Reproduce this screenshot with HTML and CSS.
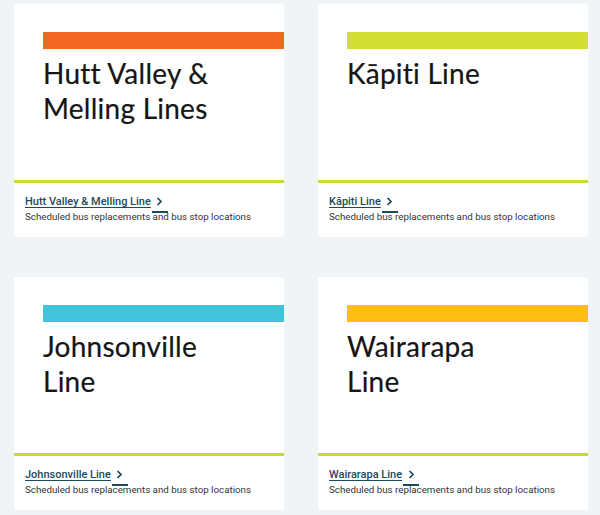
FILE: index.html
```html
<!DOCTYPE html>
<html lang="en">
<head>
<meta charset="utf-8">
<title>Rail lines</title>
<link rel="stylesheet" href="styles.css">
</head>
<body>
<main class="lines">
  <article class="card">
    <div class="art">
      <div class="bar bar-orange"></div>
      <h2 class="art-title">Hutt Valley &amp;<br>Melling Lines</h2>
    </div>
    <div class="info">
      <a class="link" href="#"><span class="link-text">Hutt Valley &amp; Melling Line</span><span class="chev"><svg width="7" height="9" viewBox="0 0 7 9"><path d="M1.5 1 L5 4.5 L1.5 8" fill="none" stroke="currentColor" stroke-width="1.7"/></svg></span></a>
      <p class="desc">Scheduled bus replacements and bus stop locations</p>
    </div>
  </article>
  <article class="card">
    <div class="art">
      <div class="bar bar-lime"></div>
      <h2 class="art-title">Kāpiti Line</h2>
    </div>
    <div class="info">
      <a class="link" href="#"><span class="link-text">Kāpiti Line</span><span class="chev"><svg width="7" height="9" viewBox="0 0 7 9"><path d="M1.5 1 L5 4.5 L1.5 8" fill="none" stroke="currentColor" stroke-width="1.7"/></svg></span></a>
      <p class="desc">Scheduled bus replacements and bus stop locations</p>
    </div>
  </article>
  <article class="card">
    <div class="art">
      <div class="bar bar-cyan"></div>
      <h2 class="art-title">Johnsonville<br>Line</h2>
    </div>
    <div class="info">
      <a class="link" href="#"><span class="link-text">Johnsonville Line</span><span class="chev"><svg width="7" height="9" viewBox="0 0 7 9"><path d="M1.5 1 L5 4.5 L1.5 8" fill="none" stroke="currentColor" stroke-width="1.7"/></svg></span></a>
      <p class="desc">Scheduled bus replacements and bus stop locations</p>
    </div>
  </article>
  <article class="card">
    <div class="art">
      <div class="bar bar-yellow"></div>
      <h2 class="art-title">Wairarapa<br>Line</h2>
    </div>
    <div class="info">
      <a class="link" href="#"><span class="link-text">Wairarapa Line</span><span class="chev"><svg width="7" height="9" viewBox="0 0 7 9"><path d="M1.5 1 L5 4.5 L1.5 8" fill="none" stroke="currentColor" stroke-width="1.7"/></svg></span></a>
      <p class="desc">Scheduled bus replacements and bus stop locations</p>
    </div>
  </article>
</main>
</body>
</html>
```
FILE: styles.css
```css
html, body {
  margin: 0;
  padding: 0;
}

body {
  background: #f1f4f6;
  font-family: Roboto, "Liberation Sans", sans-serif;
}

.lines {
  display: grid;
  grid-template-columns: 270px 270px;
  column-gap: 34px;
  row-gap: 40px;
  padding: 4px 0 0 14px;
}

.card {
  background: #fff;
  border-radius: 3px;
  height: 233px;
  display: flex;
  flex-direction: column;
  overflow: hidden;
}

/* Title artwork: colour band, line name, lime rule underneath */
.art {
  height: 148px;
  padding: 28px 0 0 29px;
  border-bottom: 3px solid #cadc2a;
}

.bar {
  height: 17px;
}

.bar-orange { background: #f26722; }
.bar-lime { background: #d4df35; }
.bar-cyan { background: #40c4da; }
.bar-yellow { background: #fdbf16; }

.art-title {
  margin: 7px 0 0;
  font-family: Lato, "Open Sans", sans-serif;
  font-weight: 400;
  font-size: 28px;
  line-height: 35px;
  letter-spacing: 0.25px;
  font-variant-ligatures: none;
  -webkit-text-stroke: 0.2px #151515;
  color: #151515;
}

.info {
  padding: 7px 0 0 11px;
}

.link {
  display: inline-flex;
  align-items: flex-start;
  color: #1b4a5e;
  text-decoration: none;
  font-size: 11px;
  font-weight: 500;
  line-height: 15px;
}

.link-text {
  text-decoration: underline;
  text-underline-offset: 2px;
}

.chev {
  display: inline-flex;
  align-items: flex-start;
  justify-content: center;
  width: 16px;
  height: 19px;
  padding-top: 3px;
  box-sizing: border-box;
  border-bottom: 2px solid #1b4a5e;
  margin-left: 1px;
}

.desc {
  margin: -3px 0 0;
  font-size: 9.75px;
  line-height: 14px;
  color: #333;
}
```
